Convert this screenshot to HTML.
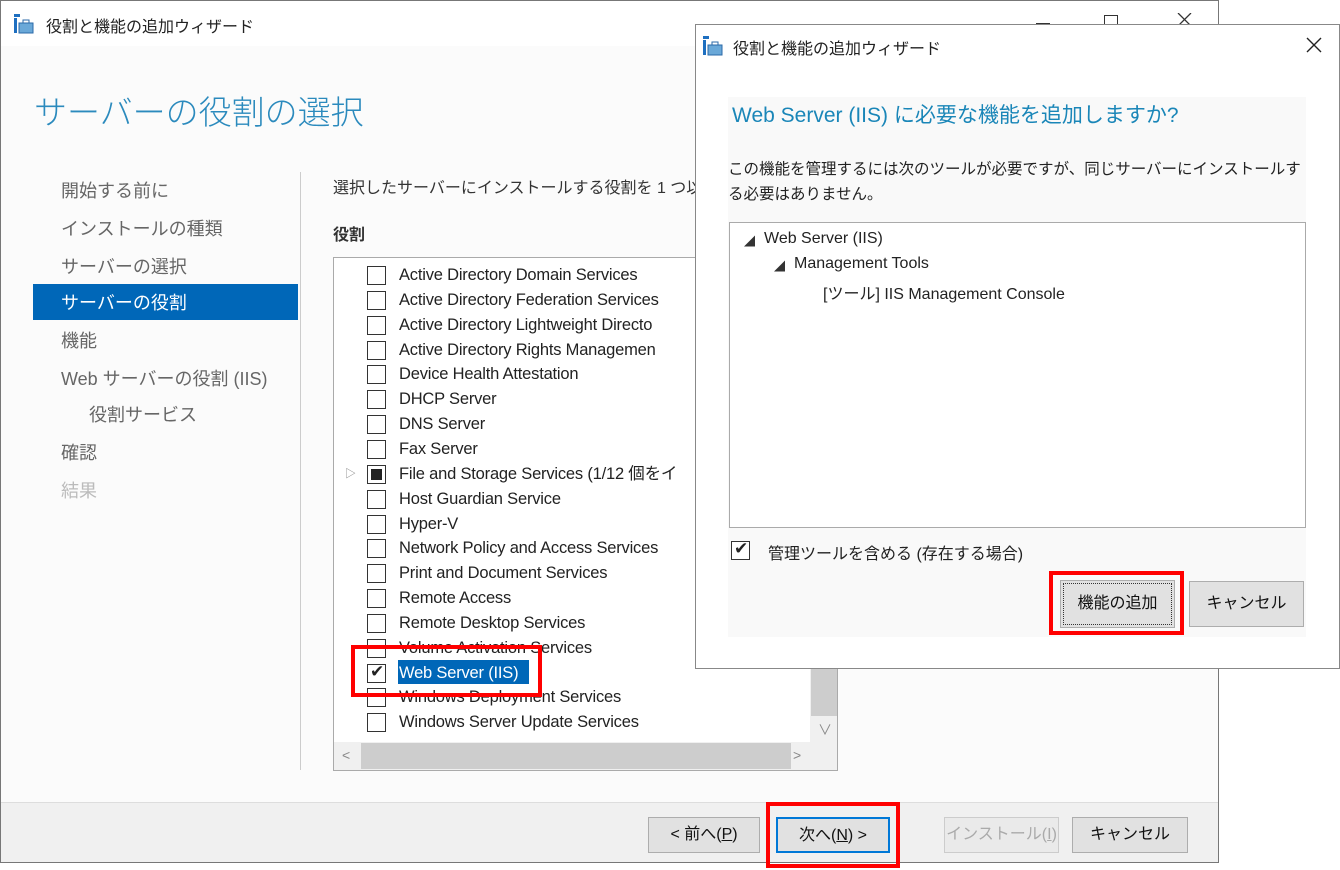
<!DOCTYPE html>
<html><head><meta charset="utf-8"><style>
*{margin:0;padding:0;box-sizing:border-box}
body{width:1340px;height:870px;background:#fff;position:relative;overflow:hidden;font-family:"Liberation Sans","Noto Sans CJK JP",sans-serif;color:#222}
.a{position:absolute;white-space:nowrap}
.cb{position:absolute;width:19px;height:19px;border:1px solid #333;background:#fff}
.btn{position:absolute;background:#e1e1e1;border:1px solid #adadad;font-size:16px;text-align:center;color:#111}
.nav{position:absolute;left:61px;font-size:18px;color:#666;line-height:20px}
.li{position:absolute;left:399px;font-size:16.5px;color:#222;line-height:20px;letter-spacing:-0.2px}
</style></head><body>
<!-- main window -->
<div class="a" style="left:0;top:0;width:1219px;height:863px;border:1px solid #777;background:#fbfbfb"></div>
<div class="a" style="left:1px;top:1px;width:1217px;height:45px;background:#fff"></div>
<svg class="a" style="left:13px;top:14px" width="22" height="20"><rect x="1" y="0" width="6" height="3" fill="#1e6fc0"/><rect x="1" y="4" width="3" height="15" fill="#1e6fc0"/><rect x="6" y="9" width="14" height="10" fill="#6aa8d8" stroke="#2b6aa8"/><rect x="10" y="6" width="6" height="3" fill="none" stroke="#2b6aa8"/></svg>
<div class="a" style="left:46px;top:13px;font-size:16px;color:#222">役割と機能の追加ウィザード</div>
<div class="a" style="left:1036px;top:23px;width:14px;height:1px;background:#333"></div>
<div class="a" style="left:1104px;top:15px;width:14px;height:10px;border:1px solid #333;border-bottom:none"></div>
<svg class="a" style="left:1177px;top:13px" width="16" height="12"><path d="M1 0L14 13M14 0L1 13" stroke="#333" stroke-width="1.3"/></svg>
<div class="a" style="left:34px;top:86px;font-size:33px;color:#2b8abd;font-weight:300">サーバーの役割の選択</div>
<div class="nav" style="top:181px">開始する前に</div>
<div class="nav" style="top:219px">インストールの種類</div>
<div class="nav" style="top:257px">サーバーの選択</div>
<div class="a" style="left:33px;top:284px;width:265px;height:36px;background:#0067b8"></div>
<div class="nav" style="top:293px;color:#fff">サーバーの役割</div>
<div class="nav" style="top:331px">機能</div>
<div class="nav" style="top:369px">Web サーバーの役割 (IIS)</div>
<div class="nav" style="top:405px;left:89px">役割サービス</div>
<div class="nav" style="top:443px">確認</div>
<div class="nav" style="top:481px;color:#bbb">結果</div>
<div class="a" style="left:300px;top:172px;width:1px;height:598px;background:#ccc"></div>
<div class="a" style="left:333px;top:174px;font-size:16px;color:#333">選択したサーバーにインストールする役割を 1 つ以上</div>
<div class="a" style="left:333px;top:221px;font-size:16px;font-weight:bold;color:#333">役割</div>
<!-- list -->
<div class="a" style="left:333px;top:257px;width:505px;height:514px;border:1px solid #aaa;background:#fff;overflow:hidden">
<div class="a" style="left:476px;top:0;width:28px;height:484px;background:#f0f0f0"></div>
<div class="a" style="left:477px;top:408px;width:26px;height:50px;background:#cdcdcd"></div>
<div class="a" style="left:484px;top:462px;font-size:14px;color:#888">∨</div>
<div class="a" style="left:0;top:484px;width:504px;height:28px;background:#f0f0f0"></div>
<div class="a" style="left:27px;top:485px;width:430px;height:26px;background:#cdcdcd"></div>
<div class="a" style="left:8px;top:489px;font-size:14px;color:#888">&lt;</div>
<div class="a" style="left:459px;top:489px;font-size:14px;color:#888">&gt;</div>
</div>
<div class="a" style="left:398px;top:660px;width:131px;height:24px;background:#0067b8"></div>
<div id="list"></div>
<div class="a" style="left:351px;top:645px;width:191px;height:52px;border:4px solid #f00"></div>
<!-- footer -->
<div class="a" style="left:1px;top:802px;width:1217px;height:60px;background:#f0f0f0;border-top:1px solid #ddd"></div>
<div class="btn" style="left:648px;top:817px;width:112px;height:36px;line-height:34px">&lt; 前へ(<u>P</u>)</div>
<div class="btn" style="left:776px;top:817px;width:114px;height:36px;line-height:34px;border:2px solid #0078d7">次へ(<u>N</u>) &gt;</div>
<div class="btn" style="left:944px;top:817px;width:115px;height:36px;line-height:34px;color:#aaa;border-color:#ccc;background:#eaeaea">インストール(<u>I</u>)</div>
<div class="btn" style="left:1072px;top:817px;width:116px;height:36px;line-height:34px">キャンセル</div>
<div class="a" style="left:766px;top:802px;width:134px;height:66px;border:4px solid #f00"></div>
<!-- dialog -->
<div class="a" style="left:695px;top:24px;width:645px;height:645px;border:1px solid #888;background:#fff"></div>
<svg class="a" style="left:702px;top:36px" width="22" height="20"><rect x="1" y="0" width="6" height="3" fill="#1e6fc0"/><rect x="1" y="4" width="3" height="15" fill="#1e6fc0"/><rect x="6" y="9" width="14" height="10" fill="#6aa8d8" stroke="#2b6aa8"/><rect x="10" y="6" width="6" height="3" fill="none" stroke="#2b6aa8"/></svg>
<div class="a" style="left:733px;top:35px;font-size:16px;color:#222">役割と機能の追加ウィザード</div>
<svg class="a" style="left:1306px;top:37px" width="16" height="16"><path d="M1 1L15 15M15 1L1 15" stroke="#222" stroke-width="1.4"/></svg>
<div class="a" style="left:728px;top:97px;width:578px;height:540px;background:#f9f9f9"></div>
<div class="a" style="left:732px;top:99px;font-size:21px;color:#1a86b8">Web Server (IIS) に必要な機能を追加しますか?</div>
<div class="a" style="left:728px;top:157px;font-size:15.5px;color:#222;line-height:25px">この機能を管理するには次のツールが必要ですが、同じサーバーにインストールす<br>る必要はありません。</div>
<div class="a" style="left:729px;top:222px;width:577px;height:306px;border:1px solid #aaa;background:#fff"></div>
<div class="a" style="left:744px;top:233px;font-size:11px;color:#333">◢</div>
<div class="a" style="left:764px;top:230px;font-size:16px;color:#222">Web Server (IIS)</div>
<div class="a" style="left:774px;top:258px;font-size:11px;color:#333">◢</div>
<div class="a" style="left:794px;top:255px;font-size:16px;color:#222">Management Tools</div>
<div class="a" style="left:823px;top:280px;font-size:16px;color:#222">[ツール] IIS Management Console</div>
<div class="cb" style="left:731px;top:541px"></div>
<div class="a" style="left:734px;top:539px;font-size:17px">✔</div>
<div class="a" style="left:768px;top:540px;font-size:16px;color:#222">管理ツールを含める (存在する場合)</div>
<div class="btn" style="left:1060px;top:580px;width:115px;height:48px;line-height:46px;outline:1px dotted #333;outline-offset:-4px">機能の追加</div>
<div class="btn" style="left:1189px;top:581px;width:115px;height:46px;line-height:44px">キャンセル</div>
<div class="a" style="left:1049px;top:571px;width:135px;height:64px;border:4px solid #f00"></div>
<script>
var items=["Active Directory Domain Services","Active Directory Federation Services","Active Directory Lightweight Directo","Active Directory Rights Managemen","Device Health Attestation","DHCP Server","DNS Server","Fax Server","File and Storage Services (1/12 個をイ","Host Guardian Service","Hyper-V","Network Policy and Access Services","Print and Document Services","Remote Access","Remote Desktop Services","Volume Activation Services","Web Server (IIS)","Windows Deployment Services","Windows Server Update Services"];
var h="";items.forEach(function(t,i){var y=265+i*24.85;
var w=(i==8||i==2||i==3)?'max-width:297px;overflow:hidden;':'';
h+='<div class="cb" style="left:367px;top:'+(y+1)+'px"></div>';
if(i==8)h+='<div class="a" style="left:371px;top:'+(y+5)+'px;width:11px;height:11px;background:#222"></div><div class="a" style="left:345px;top:'+(y+1)+'px;font-size:11px;color:#888">▷</div>';
if(i==16)h+='<div class="a" style="left:370px;top:'+(y-1)+'px;font-size:17px">✔</div>';
h+='<div class="li" style="top:'+y+'px;'+w+(i==16?'color:#fff':'')+'">'+t+'</div>';});
document.getElementById("list").outerHTML=h;
</script>
</body></html>
